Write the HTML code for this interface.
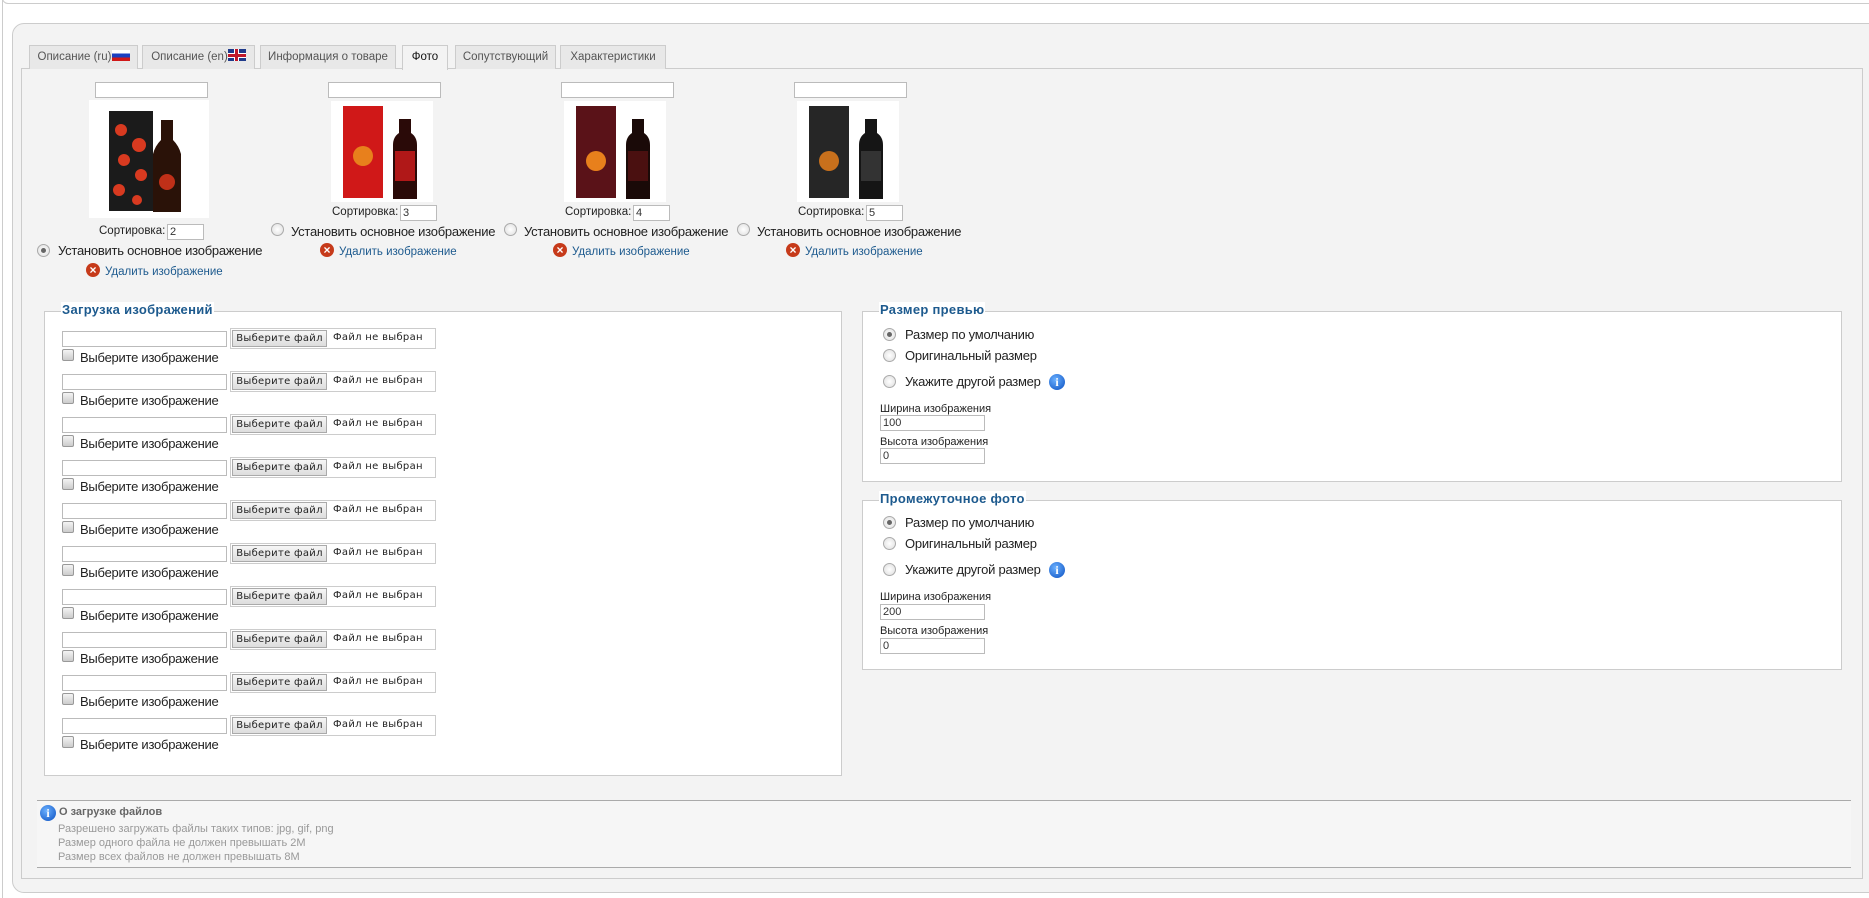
<!DOCTYPE html>
<html><head><meta charset="utf-8"><style>
*{box-sizing:border-box;margin:0;padding:0}
body{width:1869px;height:898px;background:#fff;position:relative;overflow:hidden;font-family:"Liberation Sans","DejaVu Sans",sans-serif;font-size:13px;color:#222}
.a{position:absolute;white-space:nowrap}
.t13{letter-spacing:-0.25px}
.tab{position:absolute;top:45px;height:24px;border:1px solid #ccc;border-bottom:none;background:#e8e8e8;color:#555;font-size:11.5px;line-height:22px;text-align:center}
.inp{position:absolute;background:#fff;border:1px solid #bbb;height:16px;font-size:11px;line-height:14px;padding-left:2px;color:#333}
.radio{position:absolute;width:13px;height:13px;border-radius:50%;border:1px solid #aaa;background:radial-gradient(circle,#fff 0,#ddd 100%)}
.radio.on::after{content:"";position:absolute;left:3px;top:3px;width:5px;height:5px;border-radius:50%;background:#666}
.cb{position:absolute;width:12px;height:12px;border:1px solid #999;border-radius:2px;background:linear-gradient(#f4f4f4,#ccc)}
.del{position:absolute;width:14px;height:14px;border-radius:50%;background:#c63a1a;color:#fff;font-size:12px;font-weight:bold;line-height:14px;text-align:center}
.link{color:#1d5a8e;font-size:12px}
.fs{position:absolute;border:1px solid #ccc;background:#fff}
.lg{position:absolute;background:#fff;color:#1d5a8e;font-weight:bold;font-size:13px;padding:0 1px;letter-spacing:.3px}
.file{position:absolute;width:206px;height:21px;border:1px solid #ccc;background:#fff;font-size:10px;font-family:"DejaVu Sans",sans-serif;letter-spacing:.3px}
.file b{position:absolute;left:1px;top:1px;width:95px;height:17px;border:1px solid #aaa;background:linear-gradient(#f6f6f6,#ddd);font-weight:normal;text-align:center;line-height:15px}
.file span{position:absolute;left:102px;top:3px}
.info{position:absolute;width:16px;height:16px;border-radius:50%;background:radial-gradient(circle at 40% 35%,#6ab0ff,#0a4fc0);color:#fff;font:bold 12px "Liberation Serif",serif;text-align:center;line-height:16px}
</style></head><body>
<div class="a" style="left:2px;top:-10px;width:1880px;height:14px;border:1px solid #ccc;border-radius:6px;background:#fff"></div>
<div class="a" style="left:2px;top:0;width:1px;height:898px;background:#ccc"></div>
<div class="a" style="left:12px;top:23px;width:1870px;height:870px;border:1px solid #ccc;border-radius:12px;background:#f3f3f3"></div>
<div class="a" style="left:21px;top:68px;width:1842px;height:811px;border:1px solid #ccc;background:#f3f3f3"></div>

<div class="tab" style="left:29px;width:109px">Описание (ru)<span style="display:inline-block;width:18px;height:11px;vertical-align:-1px;background:linear-gradient(#fff 33%,#1a3fc0 33% 66%,#d01818 66%)"></span></div>
<div class="tab" style="left:142px;width:113px">Описание (en)<span style="display:inline-block;width:18px;height:12px;vertical-align:-1px;background:linear-gradient(#c0182a,#c0182a) center/100% 3px no-repeat,linear-gradient(#c0182a,#c0182a) center/3px 100% no-repeat,linear-gradient(#fff,#fff) center/100% 5px no-repeat,linear-gradient(#fff,#fff) center/5px 100% no-repeat,#1f3a8a"></span></div>
<div class="tab" style="left:260px;width:136px">Информация о товаре</div>
<div class="tab" style="left:402px;width:46px;background:#f3f3f3;color:#111;height:25px">Фото</div>
<div class="tab" style="left:455px;width:101px">Сопутствующий</div>
<div class="tab" style="left:560px;width:106px">Характеристики</div>

<!-- image block 1 -->
<div class="inp" style="left:95px;top:82px;width:113px"></div>
<svg class="a" style="left:89px;top:100px" width="120" height="118"><rect width="120" height="118" fill="#fff"/><rect x="20" y="11" width="44" height="100" fill="#1b1b1b"/><g fill="#d83a20"><circle cx="32" cy="30" r="6"/><circle cx="50" cy="45" r="7"/><circle cx="35" cy="60" r="6"/><circle cx="52" cy="75" r="6"/><circle cx="30" cy="90" r="6"/><circle cx="48" cy="100" r="5"/></g><path d="M72 20h12v20q6 6 8 14v58h-28v-58q2-8 8-14z" fill="#2a1208"/><circle cx="78" cy="82" r="8" fill="#c03018"/></svg>
<div class="a" style="left:99px;top:225px;font-size:11.5px">Сортировка:</div>
<div class="inp" style="left:167px;top:224px;width:37px">2</div>
<div class="radio on" style="left:37px;top:244px"></div>
<div class="a t13" style="left:58px;top:243px">Установить основное изображение</div>
<div class="del" style="left:86px;top:263px">×</div>
<div class="a link" style="left:105px;top:266px;font-size:11.5px">Удалить изображение</div>

<!-- blocks 2-4 -->
<div class="inp" style="left:328px;top:82px;width:113px"></div>
<svg class="a" style="left:331px;top:101px" width="102" height="101"><rect width="102" height="101" fill="#fff"/><rect x="12" y="5" width="40" height="92" fill="#d01818"/><circle cx="32" cy="55" r="10" fill="#e8801c"/><path d="M68 18h12v14q6 4 6 12v54h-24v-54q0-8 6-12z" fill="#2a0a08"/><rect x="64" y="50" width="20" height="30" fill="#b01818"/></svg>
<div class="a" style="left:332px;top:206px;font-size:11.5px">Сортировка:</div>
<div class="inp" style="left:400px;top:205px;width:37px">3</div>
<div class="radio" style="left:271px;top:223px"></div>
<div class="a t13" style="left:291px;top:224px">Установить основное изображение</div>
<div class="del" style="left:320px;top:243px">×</div>
<div class="a link" style="left:339px;top:246px;font-size:11.5px">Удалить изображение</div>

<div class="inp" style="left:561px;top:82px;width:113px"></div>
<svg class="a" style="left:564px;top:101px" width="102" height="101"><rect width="102" height="101" fill="#fff"/><rect x="12" y="5" width="40" height="92" fill="#5a1218"/><circle cx="32" cy="60" r="10" fill="#e8801c"/><path d="M68 18h12v14q6 4 6 12v54h-24v-54q0-8 6-12z" fill="#1a0a08"/><rect x="64" y="50" width="20" height="30" fill="#4a1010"/></svg>
<div class="a" style="left:565px;top:206px;font-size:11.5px">Сортировка:</div>
<div class="inp" style="left:633px;top:205px;width:37px">4</div>
<div class="radio" style="left:504px;top:223px"></div>
<div class="a t13" style="left:524px;top:224px">Установить основное изображение</div>
<div class="del" style="left:553px;top:243px">×</div>
<div class="a link" style="left:572px;top:246px;font-size:11.5px">Удалить изображение</div>

<div class="inp" style="left:794px;top:82px;width:113px"></div>
<svg class="a" style="left:797px;top:101px" width="102" height="101"><rect width="102" height="101" fill="#fff"/><rect x="12" y="5" width="40" height="92" fill="#262626"/><circle cx="32" cy="60" r="10" fill="#c8701c"/><path d="M68 18h12v14q6 4 6 12v54h-24v-54q0-8 6-12z" fill="#151515"/><rect x="64" y="50" width="20" height="30" fill="#333"/></svg>
<div class="a" style="left:798px;top:206px;font-size:11.5px">Сортировка:</div>
<div class="inp" style="left:866px;top:205px;width:37px">5</div>
<div class="radio" style="left:737px;top:223px"></div>
<div class="a t13" style="left:757px;top:224px">Установить основное изображение</div>
<div class="del" style="left:786px;top:243px">×</div>
<div class="a link" style="left:805px;top:246px;font-size:11.5px">Удалить изображение</div>

<!-- upload fieldset -->
<div class="fs" style="left:44px;top:311px;width:798px;height:465px"></div>
<div class="lg" style="left:61px;top:302px">Загрузка изображений</div>

<!-- right fieldsets -->
<div class="fs" style="left:862px;top:311px;width:980px;height:171px"></div>
<div class="lg" style="left:879px;top:302px">Размер превью</div>
<div class="radio on" style="left:883px;top:328px"></div><div class="a t13" style="left:905px;top:327px">Размер по умолчанию</div>
<div class="radio" style="left:883px;top:349px"></div><div class="a t13" style="left:905px;top:348px">Оригинальный размер</div>
<div class="radio" style="left:883px;top:375px"></div><div class="a t13" style="left:905px;top:374px">Укажите другой размер</div>
<div class="info" style="left:1049px;top:374px">i</div>
<div class="a" style="left:880px;top:403px;font-size:11px">Ширина изображения</div>
<div class="inp" style="left:880px;top:415px;width:105px">100</div>
<div class="a" style="left:880px;top:436px;font-size:11px">Высота изображения</div>
<div class="inp" style="left:880px;top:448px;width:105px">0</div>

<div class="fs" style="left:862px;top:500px;width:980px;height:170px"></div>
<div class="lg" style="left:879px;top:491px">Промежуточное фото</div>
<div class="radio on" style="left:883px;top:516px"></div><div class="a t13" style="left:905px;top:515px">Размер по умолчанию</div>
<div class="radio" style="left:883px;top:537px"></div><div class="a t13" style="left:905px;top:536px">Оригинальный размер</div>
<div class="radio" style="left:883px;top:563px"></div><div class="a t13" style="left:905px;top:562px">Укажите другой размер</div>
<div class="info" style="left:1049px;top:562px">i</div>
<div class="a" style="left:880px;top:591px;font-size:11px">Ширина изображения</div>
<div class="inp" style="left:880px;top:604px;width:105px">200</div>
<div class="a" style="left:880px;top:625px;font-size:11px">Высота изображения</div>
<div class="inp" style="left:880px;top:638px;width:105px">0</div>

<!-- info -->
<div class="a" style="left:37px;top:800px;width:1814px;height:68px;border-top:1px solid #aaa;border-bottom:1px solid #aaa;background:#f6f6f6"></div>
<div class="info" style="left:40px;top:805px">i</div>
<div class="a" style="left:59px;top:806px;font-size:11px;font-weight:bold;color:#666">О загрузке файлов</div>
<div class="a" style="left:58px;top:823px;font-size:11px;color:#999">Разрешено загружать файлы таких типов: jpg, gif, png</div>
<div class="a" style="left:58px;top:837px;font-size:11px;color:#999">Размер одного файла не должен превышать 2М</div>
<div class="a" style="left:58px;top:851px;font-size:11px;color:#999">Размер всех файлов не должен превышать 8М</div>

<div class="inp" style="left:62px;top:331px;width:165px"></div><div class="file" style="left:230px;top:328px"><b>Выберите файл</b><span>Файл не выбран</span></div><div class="cb" style="left:62px;top:349px"></div><div class="a t13" style="left:80px;top:350px">Выберите изображение</div>
<div class="inp" style="left:62px;top:374px;width:165px"></div><div class="file" style="left:230px;top:371px"><b>Выберите файл</b><span>Файл не выбран</span></div><div class="cb" style="left:62px;top:392px"></div><div class="a t13" style="left:80px;top:393px">Выберите изображение</div>
<div class="inp" style="left:62px;top:417px;width:165px"></div><div class="file" style="left:230px;top:414px"><b>Выберите файл</b><span>Файл не выбран</span></div><div class="cb" style="left:62px;top:435px"></div><div class="a t13" style="left:80px;top:436px">Выберите изображение</div>
<div class="inp" style="left:62px;top:460px;width:165px"></div><div class="file" style="left:230px;top:457px"><b>Выберите файл</b><span>Файл не выбран</span></div><div class="cb" style="left:62px;top:478px"></div><div class="a t13" style="left:80px;top:479px">Выберите изображение</div>
<div class="inp" style="left:62px;top:503px;width:165px"></div><div class="file" style="left:230px;top:500px"><b>Выберите файл</b><span>Файл не выбран</span></div><div class="cb" style="left:62px;top:521px"></div><div class="a t13" style="left:80px;top:522px">Выберите изображение</div>
<div class="inp" style="left:62px;top:546px;width:165px"></div><div class="file" style="left:230px;top:543px"><b>Выберите файл</b><span>Файл не выбран</span></div><div class="cb" style="left:62px;top:564px"></div><div class="a t13" style="left:80px;top:565px">Выберите изображение</div>
<div class="inp" style="left:62px;top:589px;width:165px"></div><div class="file" style="left:230px;top:586px"><b>Выберите файл</b><span>Файл не выбран</span></div><div class="cb" style="left:62px;top:607px"></div><div class="a t13" style="left:80px;top:608px">Выберите изображение</div>
<div class="inp" style="left:62px;top:632px;width:165px"></div><div class="file" style="left:230px;top:629px"><b>Выберите файл</b><span>Файл не выбран</span></div><div class="cb" style="left:62px;top:650px"></div><div class="a t13" style="left:80px;top:651px">Выберите изображение</div>
<div class="inp" style="left:62px;top:675px;width:165px"></div><div class="file" style="left:230px;top:672px"><b>Выберите файл</b><span>Файл не выбран</span></div><div class="cb" style="left:62px;top:693px"></div><div class="a t13" style="left:80px;top:694px">Выберите изображение</div>
<div class="inp" style="left:62px;top:718px;width:165px"></div><div class="file" style="left:230px;top:715px"><b>Выберите файл</b><span>Файл не выбран</span></div><div class="cb" style="left:62px;top:736px"></div><div class="a t13" style="left:80px;top:737px">Выберите изображение</div>
</body></html>
